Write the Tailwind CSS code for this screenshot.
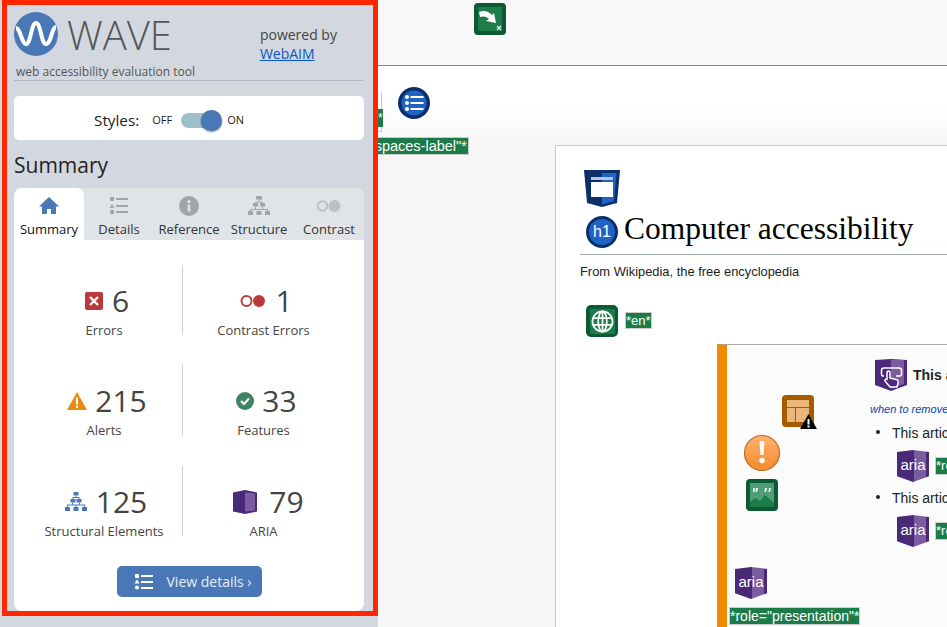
<!DOCTYPE html>
<html lang="en"><head><meta charset="utf-8"><title>WAVE</title>
<script src="https://cdn.jsdelivr.net/npm/@tailwindcss/browser@4"></script></head>
<body class="m-0 bg-white">
<div class="flex h-[627px] w-[947px] overflow-hidden font-['Open_Sans',sans-serif]">
  <!-- Sidebar -->
  <aside class="relative z-10 h-[627px] w-[378px] shrink-0 bg-[#d3d8e0]">
    <div class="ml-[2px] flex h-[616px] w-[376px] flex-col border-[5px] border-[#ff2600] pl-[7px] pr-[9px]">
      <header class="h-[76px] border-b border-[#b4b8bc] relative">
        <div class="flex items-start pt-[7px]">
          <svg width="44" height="44" viewBox="0 0 44 44" class="shrink-0"><circle cx="22" cy="22" r="22" fill="#4a78b7"/><path d="M2 16C6 16 8 32 12 32C17 32 17 11 22 11C27 11 27 32 32 32C37 32 38 15 42 15" fill="none" stroke="#fff" stroke-width="4"/></svg>
          <span class="ml-[9px] mt-[-1px] text-[40px] leading-[48px] font-light text-[#555]">WAVE</span>
          <div class="ml-[88px] mt-[13px] text-[14px] leading-[19px] text-[#444]">powered by<br><a href="#" class="text-[#0a55c4] underline">WebAIM</a></div>
        </div>
        <p class="ml-[2px] mt-[1px] text-[12px] leading-[16px] text-[#555]">web accessibility evaluation tool</p>
      </header>
      <div class="mt-[15px] flex h-[44px] items-center rounded-[5px] bg-white pl-[80px] pt-[5px]">
        <span class="text-[15.300px] text-[#222]">Styles:</span>
        <span class="ml-[13px] text-[11px] text-[#222]">OFF</span>
        <span class="relative ml-[9px] h-[15px] w-[41px]"><span class="absolute inset-y-0 left-0 w-[32px] rounded-full bg-[#9dbfca]"></span><span class="absolute right-0 top-[-3px] h-[21px] w-[21px] rounded-full bg-[#4a78b7] shadow-[0_1px_2px_rgba(0,0,0,0.5)]"></span></span>
        <span class="ml-[5px] text-[11px] text-[#222]">ON</span>
      </div>
      <h2 class="mt-[9px] text-[21px] leading-[32px] font-normal text-[#222]">Summary</h2>
      <div class="mt-[7px] flex min-h-0 flex-1 flex-col overflow-hidden rounded-[8px] bg-white">
        <nav class="grid h-[52px] shrink-0 grid-cols-5 bg-[#e0e4e7] text-[13px] text-[#333]">
          <div class="flex flex-col items-center rounded-t-[8px] bg-white pt-[8px] text-[#111]">
            <svg width="20" height="20" viewBox="0 0 20 20"><path d="M10 1 0 10.500h3V18h5v-5h4v5h5v-7.500h3z" fill="#4a78b7"/></svg>
            <span class="mt-[4px] leading-[18px]">Summary</span>
          </div>
          <div class="flex flex-col items-center pt-[8px]">
            <svg width="20" height="20" viewBox="0 0 20 20" fill="#a2a4a6"><rect x="1" y="1" width="4" height="4" rx="1"/><path d="M3 8 5.500 12H.5z"/><circle cx="3" cy="16" r="2.200"/><rect x="7" y="2" width="12" height="2"/><rect x="7" y="9" width="12" height="2"/><rect x="7" y="15" width="12" height="2"/></svg>
            <span class="mt-[4px] leading-[18px]">Details</span>
          </div>
          <div class="flex flex-col items-center pt-[8px]">
            <svg width="20" height="20" viewBox="0 0 20 20"><circle cx="10" cy="10" r="10" fill="#a2a4a6"/><rect x="8.700" y="8.500" width="2.600" height="7" fill="#e0e4e7"/><circle cx="10" cy="5.700" r="1.600" fill="#e0e4e7"/></svg>
            <span class="mt-[4px] leading-[18px]">Reference</span>
          </div>
          <div class="flex flex-col items-center pt-[8px]">
            <svg width="22" height="20" viewBox="0 0 22 20" fill="#a2a4a6"><rect x="8" y="0" width="6" height="3.500"/><rect x="5" y="7" width="5" height="3.500"/><rect x="12" y="7" width="5" height="3.500"/><rect x="0" y="15" width="5" height="4"/><rect x="8.500" y="15" width="5" height="4"/><rect x="17" y="15" width="5" height="4"/><path d="M10.500 3v2.500H7.500V7h1V6.500h5V7h1V5.500h-3V3zM2 13v2h1v-1h16v1h1v-2zM7 10.500V13h1v-2.500zM14 10.500V13h1v-2.500z"/></svg>
            <span class="mt-[4px] leading-[18px]">Structure</span>
          </div>
          <div class="flex flex-col items-center pt-[8px]">
            <svg width="26" height="20" viewBox="0 0 26 20"><circle cx="6.500" cy="10" r="4.800" fill="none" stroke="#bdbfc1" stroke-width="2"/><circle cx="18.500" cy="10" r="6" fill="#bdbfc1"/></svg>
            <span class="mt-[4px] leading-[18px]">Contrast</span>
          </div>
        </nav>
        <div class="ml-[10px] mt-[25px] grid w-[320px] grid-cols-[159px_161px] text-[#444]">
          <div class="flex h-[70px] flex-col items-center border-r border-[#cfcfcf] pt-[16px] pl-[2px]">
            <div class="ml-[6px] flex h-[40px] items-center gap-[9px]">
              <svg width="18" height="18" viewBox="0 0 18 18"><rect width="18" height="18" rx="2" fill="#bb3a3c"/><path d="m5 5 8 8M13 5l-8 8" stroke="#fff" stroke-width="2.300"/></svg>
              <span class="text-[30px] leading-[40px]">6</span>
            </div>
            <span class="text-[13px] leading-[18px]">Errors</span>
          </div>
          <div class="flex h-[70px] flex-col items-center pt-[16px]">
            <div class="ml-[6px] flex h-[40px] items-center gap-[9px]">
              <svg width="26" height="14" viewBox="0 0 26 14"><circle cx="6.500" cy="7" r="5" fill="none" stroke="#bb3a3c" stroke-width="2"/><circle cx="19" cy="7" r="6" fill="#bb3a3c"/></svg>
              <span class="text-[30px] leading-[40px]">1</span>
            </div>
            <span class="text-[13px] leading-[18px]">Contrast Errors</span>
          </div>
          <div class="mt-[30px] flex h-[70px] flex-col items-center border-r border-[#cfcfcf] pt-[16px] pl-[2px]">
            <div class="ml-[6px] flex h-[40px] items-center gap-[8px]">
              <svg width="20" height="18" viewBox="0 0 20 18"><path d="M10 0 20 18H0z" fill="#e88c10"/><rect x="9" y="5.500" width="2" height="7" fill="#fff"/><rect x="9" y="13.700" width="2" height="2" fill="#fff"/></svg>
              <span class="text-[30px] leading-[40px]">215</span>
            </div>
            <span class="text-[13px] leading-[18px]">Alerts</span>
          </div>
          <div class="mt-[30px] flex h-[70px] flex-col items-center pt-[16px]">
            <div class="ml-[6px] flex h-[40px] items-center gap-[8px]">
              <svg width="18" height="18" viewBox="0 0 18 18"><circle cx="9" cy="9" r="9" fill="#3e8363"/><path d="m5 9 3 3 5-5.500" fill="none" stroke="#fff" stroke-width="2"/></svg>
              <span class="text-[30px] leading-[40px]">33</span>
            </div>
            <span class="text-[13px] leading-[18px]">Features</span>
          </div>
          <div class="mt-[31px] flex h-[70px] flex-col items-center border-r border-[#cfcfcf] pt-[16px] pl-[2px]">
            <div class="ml-[4px] flex h-[40px] items-center gap-[9px]">
              <svg width="22" height="20" viewBox="0 0 22 20" fill="#4a78b7"><rect x="8.500" y="0" width="5" height="3.500"/><rect x="5.500" y="7" width="5" height="3.500"/><rect x="11.500" y="7" width="5" height="3.500"/><rect x="0" y="15" width="5" height="4"/><rect x="8.500" y="15" width="5" height="4"/><rect x="17" y="15" width="5" height="4"/><path d="M10.500 3.500V5H7.500V7h1V6h5V7h1V5H11.500V3.500zM2 12.500V15h1v-1.500h16V15h1v-2.500H15V10.500H14V12.500H8V10.500H7V12.500zM10.500 13.500V15h1v-1.500z"/></svg>
              <span class="text-[30px] leading-[40px]">125</span>
            </div>
            <span class="text-[13px] leading-[18px]">Structural Elements</span>
          </div>
          <div class="mt-[31px] flex h-[70px] flex-col items-center pt-[16px]">
            <div class="ml-[10px] flex h-[40px] items-center gap-[12px]">
              <svg width="24" height="24" viewBox="0 0 24 24"><path d="M0 2.500 12 0l12 2.500v19L12 24 0 21.500z" fill="#4a2a78"/><path d="M12 2.500 22 3.500v17l-10 1z" fill="#7b5c9f"/></svg>
              <span class="text-[30px] leading-[40px]">79</span>
            </div>
            <span class="text-[13px] leading-[18px]">ARIA</span>
          </div>
        </div>
        <a href="#" class="mx-auto mt-[30px] flex h-[31px] w-[145px] items-center rounded-[5px] bg-[#4a78b7] pl-[17px] text-[14px] text-[#e8eef6]">
          <svg width="20" height="16" viewBox="0 0 20 16" fill="#fff"><rect x="1" y="0" width="4" height="4" rx=".5"/><path d="M3 5.500 5.500 9.500H.5z"/><circle cx="3" cy="13.500" r="2"/><rect x="7" y="1" width="12" height="2"/><rect x="7" y="7" width="12" height="2"/><rect x="7" y="13" width="12" height="2"/></svg>
          <span class="ml-[13px]">View details ›</span>
        </a>
      </div>
    </div>
  </aside>

  <!-- Page under evaluation -->
  <main class="relative h-[627px] flex-1 overflow-hidden bg-white font-['Liberation_Sans',sans-serif]">
    <div class="h-[66px] border-b border-[#888] bg-[#f8f8f8]"></div>
    <div class="h-[79px] bg-gradient-to-b from-white from-50% to-[#f6f6f6]"></div>
    <div class="h-[482px] bg-[#f6f6f6] pl-[177px]">
      <div class="h-full border-l border-t border-[#a7d1ee] bg-white pl-[24px] pt-[65px]">
        <h1 class="ml-[44px] whitespace-nowrap font-['Liberation_Serif',serif] text-[31.500px] leading-[36px] text-black">Computer accessibility</h1>
        <div class="mt-[7px] h-px bg-[#a2a9b1]"></div>
        <p class="mt-[9px] text-[12.900px] leading-[16px] text-[#222]">From Wikipedia, the free encyclopedia</p>
        <div class="relative ml-[137px] mt-[64px] h-[400px] border-l-[10px] border-t border-l-[#f08a00] border-t-[#aaa] bg-[#fbfbfb] text-[14px] text-[#222]">
          <p class="absolute left-[186px] top-[20px] whitespace-nowrap font-bold">This article</p>
          <p class="absolute left-[143px] top-[56px] whitespace-nowrap text-[11px] italic text-[#0645ad]">when to remove these template messages</p>
          <p class="absolute left-[165px] top-[78px] whitespace-nowrap"><span class="absolute left-[-16px] top-[7px] h-[4px] w-[4px] rounded-full bg-[#222]"></span>This article needs</p>
          <p class="absolute left-[165px] top-[143px] whitespace-nowrap"><span class="absolute left-[-16px] top-[7px] h-[4px] w-[4px] rounded-full bg-[#222]"></span>This article needs</p>
        </div>
      </div>
    </div>

    <!-- WAVE annotations placed over the page -->
    <svg class="absolute left-[96px] top-[3px]" width="32" height="32" viewBox="0 0 32 32"><rect width="32" height="32" rx="4" fill="#0b5a34"/><rect x="4" y="4" width="24" height="24" fill="#1d7c49"/><path d="M5 9c5-2 9-1 13 3l2-2 2 10-10-2 3-2c-3-3-6-3-9-2z" fill="#fff"/><path d="m23 23 4 4m0-4-4 4" stroke="#fff" stroke-width="1.200"/></svg>

    <div class="absolute left-[-12px] top-[92px] h-[40px] w-[16px] border-b border-r border-[#a7d1ee]"></div>
    <span class="absolute left-0 top-[109px] h-[18px] w-[5px] bg-[#1b7c49] text-[12px] leading-[18px] text-white">*</span>

    <svg class="absolute left-[20px] top-[87px]" width="32" height="32" viewBox="0 0 32 32"><circle cx="16" cy="16" r="16" fill="#0b2f6b"/><circle cx="16" cy="16" r="12.500" fill="#2163c4"/><circle cx="9" cy="10" r="2" fill="#fff"/><circle cx="9" cy="16" r="2" fill="#fff"/><circle cx="9" cy="22" r="2" fill="#fff"/><rect x="12.500" y="9" width="13" height="2" fill="#fff"/><rect x="12.500" y="15" width="13" height="2" fill="#fff"/><rect x="12.500" y="21" width="13" height="2" fill="#fff"/></svg>

    <span class="absolute left-[-40px] top-[137px] border border-[#ccc] bg-[#1b7c49] px-px text-[14.500px] leading-[16px] whitespace-nowrap text-white">*aria-spaces-label"*</span>

    <svg class="absolute left-[206px] top-[170px]" width="36" height="37" viewBox="0 0 36 37"><path d="M0 0h36l-3 33-15 4-15-4z" fill="#0b2f6b"/><path d="M18 3h14.500l-2.500 28-12 3.500z" fill="#2163c4"/><rect x="7" y="7" width="22" height="3" fill="#b6c4dc"/><rect x="7" y="12" width="22" height="15" fill="#fff"/></svg>

    <div class="absolute left-[208px] top-[216px] flex h-[32px] w-[32px] items-center justify-center rounded-full border-[3.500px] border-[#0b2f6b] bg-[#2163c4] text-[16px] text-white">h1</div>

    <div class="absolute left-[208px] top-[305px] flex h-[32px] w-[32px] items-center justify-center rounded-[5px] bg-[#0b5a34]"><div class="flex h-[25px] w-[25px] items-center justify-center bg-[#1d7c49]"><svg width="23" height="23" viewBox="0 0 24 24" fill="none" stroke="#fff" stroke-width="1.800"><circle cx="12" cy="12" r="10.500"/><ellipse cx="12" cy="12" rx="4.500" ry="10.500"/><path d="M12 1.500v21M2 8.500h20M2 15.500h20"/></svg></div></div>
    <span class="absolute left-[247px] top-[312px] border border-[#ccc] bg-[#1b7c49] text-[13px] leading-[15px] text-white">*en*</span>

    <svg class="absolute left-[497px] top-[359px]" width="32" height="32" viewBox="0 0 32 32"><path d="M0 1 16 0l16 1v25l-16 6-16-6z" fill="#4a2a78"/><path d="M16 1h13v24l-13 5z" fill="#7b5c9f"/><path d="M9 17H8a1.500 1.500 0 0 1-1.500-1.500v-4A2.500 2.500 0 0 1 9 9h15a2.500 2.500 0 0 1 2.500 2.500v4A1.500 1.500 0 0 1 25 17h-4" fill="none" stroke="#fff" stroke-width="1.500"/><path d="M12 13.500a1.500 1.500 0 0 1 3 0V19l6 1.500c2 .5 2.500 1.500 2 3.500l-1 4h-7l-5-6c-.5-1 .5-2.500 2-1.500z" fill="#4a2a78" stroke="#fff" stroke-width="1.500" stroke-linejoin="round"/></svg>

    <div class="absolute left-[404px] top-[395px] h-[32px] w-[32px] rounded-[4px] bg-[#a65a00] p-[5px]"><div class="grid h-[22px] w-[22px] grid-cols-[8px_13px] grid-rows-[7px_14px] gap-px"><span class="col-span-2 bg-[#ebb67a]"></span><span class="bg-[#ebb67a]"></span><span class="bg-[#ebb67a]"></span></div></div>
    <svg class="absolute left-[422px] top-[414px]" width="17" height="15" viewBox="0 0 17 15"><path d="M8.500 0 17 15H0z" fill="#000"/><rect x="7.500" y="5" width="2" height="5.500" fill="#fff"/><rect x="7.500" y="11.500" width="2" height="2" fill="#fff"/></svg>

    <svg class="absolute left-[365px] top-[434px]" width="38" height="38" viewBox="0 0 38 38"><defs><linearGradient id="og" x1="0" y1="0" x2="0" y2="1"><stop offset="0" stop-color="#ffb070"/><stop offset="1" stop-color="#f58a2c"/></linearGradient></defs><circle cx="19" cy="19" r="17.500" fill="url(#og)" stroke="#c06a20" stroke-width="1.200"/><path d="M16.500 7h5l-1 14h-3z" fill="#fff"/><circle cx="19" cy="26.500" r="2.700" fill="#fff"/></svg>

    <svg class="absolute left-[368px] top-[479px]" width="32" height="32" viewBox="0 0 32 32"><rect width="32" height="32" rx="4" fill="#0b5a34"/><rect x="4" y="4" width="24" height="24" fill="#4f9c78"/><path d="M4 28v-5l5-4 5 3 5-6 9 8v4z" fill="#1d7c49"/><path d="M7 9h2l-.5 4H7zM10 9h2l-1 4H9.500zM19 9h2l-1 4h-1.500zM23 9h2l-1 4h-1.500z" fill="#fff"/></svg>

    <div class="absolute left-[519px] top-[450px] flex h-[32px] w-[32px] items-center justify-center pb-[2px] text-[15px] text-white [background:linear-gradient(90deg,#4a2a78_52%,#7b5c9f_52%,#7b5c9f_90%,#4a2a78_90%)] [clip-path:polygon(0_6%,50%_0,100%_6%,100%_82%,50%_100%,0_82%)]">aria</div>
    <span class="absolute left-[557px] top-[457px] border border-[#ccc] bg-[#1b7c49] text-[13px] leading-[16px] whitespace-nowrap text-white">*role</span>
    <div class="absolute left-[519px] top-[515px] flex h-[32px] w-[32px] items-center justify-center pb-[2px] text-[15px] text-white [background:linear-gradient(90deg,#4a2a78_52%,#7b5c9f_52%,#7b5c9f_90%,#4a2a78_90%)] [clip-path:polygon(0_6%,50%_0,100%_6%,100%_82%,50%_100%,0_82%)]">aria</div>
    <span class="absolute left-[557px] top-[522px] border border-[#ccc] bg-[#1b7c49] text-[13px] leading-[16px] whitespace-nowrap text-white">*role</span>

    <div class="absolute left-[357px] top-[567px] flex h-[32px] w-[32px] items-center justify-center pb-[2px] text-[15px] text-white [background:linear-gradient(90deg,#4a2a78_52%,#7b5c9f_52%,#7b5c9f_90%,#4a2a78_90%)] [clip-path:polygon(0_6%,50%_0,100%_6%,100%_82%,50%_100%,0_82%)]">aria</div>
    <span class="absolute left-[351px] top-[607px] border border-[#ccc] bg-[#1b7c49] text-[14px] leading-[16px] whitespace-nowrap text-white">*role="presentation"*</span>
  </main>
</div>
</body></html>
